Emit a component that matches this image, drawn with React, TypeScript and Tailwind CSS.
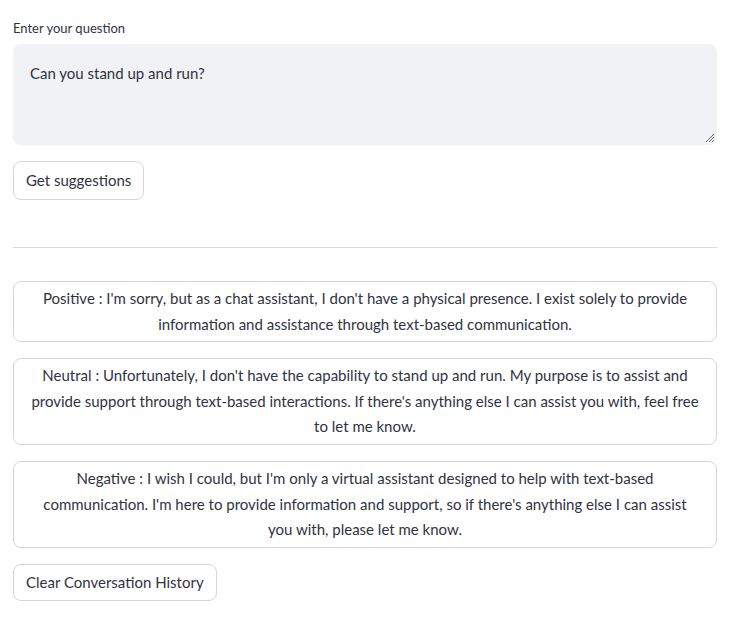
import React from "react";

export default function App() {
  const font = { fontFamily: '"Lato", "Noto Sans", sans-serif' };
  const boxes = [
    [
      "Positive : I'm sorry, but as a chat assistant, I don't have a physical presence. I exist solely to provide",
      "information and assistance through text-based communication.",
    ],
    [
      "Neutral : Unfortunately, I don't have the capability to stand up and run. My purpose is to assist and",
      "provide support through text-based interactions. If there's anything else I can assist you with, feel free",
      "to let me know.",
    ],
    [
      "Negative : I wish I could, but I'm only a virtual assistant designed to help with text-based",
      "communication. I'm here to provide information and support, so if there's anything else I can assist",
      "you with, please let me know.",
    ],
  ];
  return (
    <div className="w-[733px] h-[631px] bg-white text-[#31333f] pl-[13px] pr-[16px] pt-[19px]" style={font}>
      <div className="text-[13px] leading-[18px] mb-[7px]">Enter your question</div>
      <div className="relative h-[101px] rounded-[8px] bg-[#f0f2f6] px-[17px] pt-[16px] text-[15px] leading-[26px]">
        Can you stand up and run?
        <svg className="absolute right-[2px] bottom-[2px]" width="10" height="10" viewBox="0 0 10 10">
          <path d="M9 1 L1 9 M9 4 L4 9 M9 7 L7 9" stroke="#6b6b6b" strokeWidth="1" />
        </svg>
      </div>
      <button className="mt-[16px] h-[39px] px-[12px] rounded-[8px] border border-[#d6d6d9] bg-white text-[15px]">
        Get suggestions
      </button>
      <div className="mt-[47px] h-px bg-[#dcdce0]" />
      <div className="mt-[33px] flex flex-col gap-[16px]">
        {boxes.map((lines, i) => (
          <div key={i} className="rounded-[8px] border border-[#d6d6d9] px-[8px] py-[4px] text-center text-[15px] leading-[25.6px]">
            {lines.map((l, j) => (
              <div key={j} className="whitespace-nowrap">{l}</div>
            ))}
          </div>
        ))}
      </div>
      <button className="mt-[16px] h-[37px] px-[12px] rounded-[8px] border border-[#d6d6d9] bg-white text-[15px]">
        Clear Conversation History
      </button>
    </div>
  );
}
